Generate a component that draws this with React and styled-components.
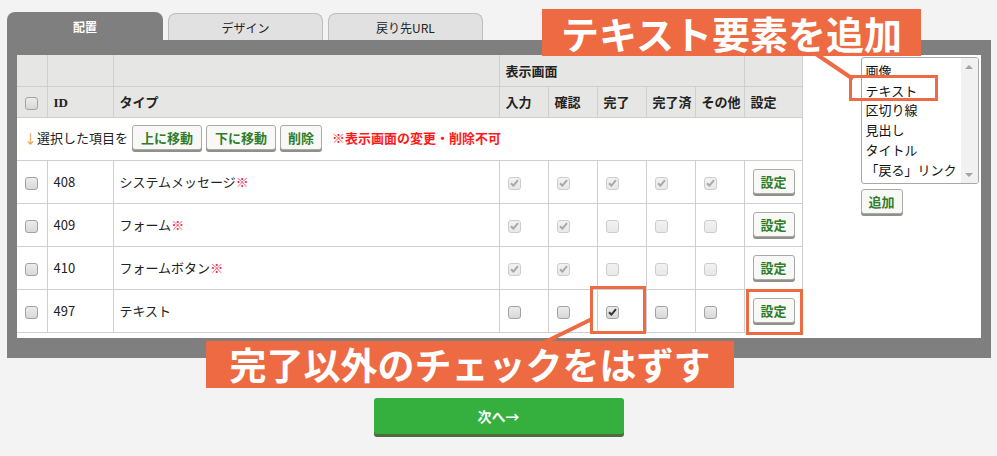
import React from "react";
import styled, { createGlobalStyle } from "styled-components";

const ORANGE = "#ed6a43";

const GlobalStyle = createGlobalStyle`
  body {
    margin: 0;
    background: #f3f3f3;
    font-family: "Noto Sans CJK JP", "Noto Sans", sans-serif;
    font-size: 13px;
    color: #222;
  }
`;

const Page = styled.div`
  position: relative;
  width: 997px;
  height: 456px;
  padding: 12px 0 0 7px;
  box-sizing: border-box;
  overflow: hidden;
`;

const TabBar = styled.div`
  display: flex;
  gap: 5px;
  height: 28px;
`;

const Tab = styled.div`
  width: ${(p) => p.width}px;
  box-sizing: border-box;
  display: flex;
  align-items: center;
  justify-content: center;
  border-radius: 8px 8px 0 0;
  font-size: 12px;
  background: ${(p) => (p.active ? "#7f7f7f" : "#e1e1e1")};
  color: ${(p) => (p.active ? "#fff" : "#222")};
  font-weight: ${(p) => (p.active ? 700 : 400)};
  border: ${(p) => (p.active ? "none" : "1px solid #bdbdbd")};
  border-bottom: none;
  margin-top: ${(p) => (p.active ? 0 : 1)}px;
`;

const Panel = styled.div`
  width: 984px;
  box-sizing: border-box;
  background: #7f7f7f;
  padding: 15px 10px 20px;
`;

const Inner = styled.div`
  background: #fff;
  display: flex;
  align-items: flex-start;
  height: 283px;
`;

const Table = styled.table`
  border-collapse: collapse;
  table-layout: fixed;
  width: 785px;
`;

const HeadRow = styled.tr`
  height: 31px;
`;

const BodyRow = styled.tr`
  height: 43px;
`;

const Th = styled.th`
  background: #e6e7e4;
  border: 1px solid #cfcfcf;
  border-top: none;
  text-align: left;
  padding: 0 0 0 ${(p) => (p.box ? 8 : 6)}px;
  font-weight: 700;
  font-size: 13px;
  white-space: nowrap;
  &:first-child {
    border-left: none;
  }
`;

const IdLabel = styled.span`
  font-family: "Liberation Serif", serif;
  font-weight: 700;
  font-size: 13px;
`;

const Td = styled.td`
  border: 1px solid #cfcfcf;
  padding: 0 0 0 ${(p) => (p.box ? 8 : 6)}px;
  text-align: left;
  white-space: nowrap;
  &:first-child {
    border-left: none;
  }
`;

const ToolCell = styled.td`
  border: 1px solid #cfcfcf;
  border-left: none;
  padding: 0 0 2px 7px;
`;

const ToolBar = styled.div`
  display: flex;
  align-items: center;
  gap: 4px;
`;

const Arrow = styled.span`
  color: #e89b2f;
`;

const Warn = styled.span`
  color: #ff1a1a;
  font-weight: 700;
  margin-left: 6px;
`;

const Mark = styled.span`
  color: #f5224f;
`;

const Button = styled.button`
  font-family: inherit;
  font-size: 13px;
  font-weight: 700;
  color: #2f7d2a;
  background: #f8f8f6;
  border: 1px solid #a9aca6;
  border-radius: 3px;
  box-shadow: 0 2px 0 #8e918b;
  height: 25px;
  padding: 0 ${(p) => p.pad || 8}px;
  line-height: 1;
  cursor: pointer;
`;

const Box = styled.span`
  display: inline-flex;
  align-items: center;
  justify-content: center;
  width: 13px;
  height: 13px;
  box-sizing: border-box;
  border-radius: 3px;
  vertical-align: middle;
  border: 1px solid ${(p) => (p.disabled ? "#cdcdcd" : "#a3a3a3")};
  background: ${(p) =>
    p.disabled
      ? "linear-gradient(#f2f2f2, #e8e8e8)"
      : "linear-gradient(#ececec, #d8d8d8)"};
  svg {
    display: block;
  }
`;

const Check = ({ checked, disabled }) => (
  <Box disabled={disabled}>
    {checked && (
      <svg width="9" height="8" viewBox="0 0 9 8">
        <path
          d="M1 4.2 L3.4 6.6 L8 1.2"
          fill="none"
          stroke={disabled ? "#a8a8a8" : "#333"}
          strokeWidth="2"
        />
      </svg>
    )}
  </Box>
);

const Side = styled.div`
  margin-left: 58px;
  padding-top: 2px;
  display: flex;
  flex-direction: column;
  align-items: flex-start;
  gap: 5px;
`;

const ListBox = styled.div`
  width: 118px;
  height: 127px;
  box-sizing: border-box;
  border: 1px solid #a8a8a8;
  border-radius: 3px;
  display: flex;
  overflow: hidden;
  background: #fff;
`;

const ListItems = styled.div`
  flex: 1;
  padding: 3px 0 0 4px;
  font-size: 13px;
  line-height: 19.7px;
  color: #111;
  white-space: nowrap;
  overflow: hidden;
`;

const ScrollTrack = styled.div`
  width: 17px;
  flex: none;
  background: #f1f1f1;
  display: flex;
  flex-direction: column;
  justify-content: space-between;
  align-items: center;
  padding: 7px 0 6px;
`;

const Tri = styled.span`
  width: 0;
  height: 0;
  border-left: 4px solid transparent;
  border-right: 4px solid transparent;
  ${(p) =>
    p.up
      ? "border-bottom: 4px solid #a3a3a3;"
      : "border-top: 4px solid #a3a3a3;"}
`;

const Footer = styled.div`
  display: flex;
  justify-content: center;
  padding: 40px 7px 0 0;
`;

const NextButton = styled.button`
  width: 250px;
  height: 36px;
  background: #35b03f;
  color: #fff;
  font-family: inherit;
  font-size: 14px;
  font-weight: 700;
  border: none;
  border-radius: 3px;
  box-shadow: 0 3px 0 #4e6c40;
`;

const Callout = styled.div`
  position: absolute;
  left: ${(p) => p.x}px;
  top: ${(p) => p.y}px;
  width: ${(p) => p.w}px;
  height: 47px;
  background: ${ORANGE};
  color: #fff;
  font-weight: 700;
  font-size: ${(p) => p.size}px;
  display: flex;
  align-items: center;
  justify-content: center;
  line-height: 1;
`;

const Overlay = styled.svg`
  position: absolute;
  left: 0;
  top: 0;
  pointer-events: none;
`;

const rows = [
  { id: 408, name: "システムメッセージ", mark: true, checks: [1, 1, 1, 1, 1], locked: true },
  { id: 409, name: "フォーム", mark: true, checks: [1, 1, 0, 0, 0], locked: true },
  { id: 410, name: "フォームボタン", mark: true, checks: [1, 1, 0, 0, 0], locked: true },
  { id: 497, name: "テキスト", mark: false, checks: [0, 0, 1, 0, 0], locked: false },
];

const items = ["画像", "テキスト", "区切り線", "見出し", "タイトル", "「戻る」リンク"];

export default function App() {
  return (
    <Page>
      <GlobalStyle />
      <TabBar>
        <Tab width={156} active>配置</Tab>
        <Tab width={155}>デザイン</Tab>
        <Tab width={155}>戻り先URL</Tab>
      </TabBar>
      <Panel>
        <Inner>
          <Table>
            <colgroup>
              <col style={{ width: 30 }} />
              <col style={{ width: 66 }} />
              <col style={{ width: 386 }} />
              <col style={{ width: 49 }} />
              <col style={{ width: 49 }} />
              <col style={{ width: 49 }} />
              <col style={{ width: 49 }} />
              <col style={{ width: 49 }} />
              <col style={{ width: 58 }} />
            </colgroup>
            <thead>
              <HeadRow>
                <Th />
                <Th />
                <Th />
                <Th colSpan={5}>表示画面</Th>
                <Th />
              </HeadRow>
              <HeadRow>
                <Th box>
                  <Check />
                </Th>
                <Th>
                  <IdLabel>ID</IdLabel>
                </Th>
                <Th>タイプ</Th>
                <Th>入力</Th>
                <Th>確認</Th>
                <Th>完了</Th>
                <Th>完了済</Th>
                <Th>その他</Th>
                <Th>設定</Th>
              </HeadRow>
            </thead>
            <tbody>
              <BodyRow>
                <ToolCell colSpan={9}>
                  <ToolBar>
                    <span>
                      <Arrow>↓</Arrow>選択した項目を
                    </span>
                    <Button>上に移動</Button>
                    <Button>下に移動</Button>
                    <Button pad={7}>削除</Button>
                    <Warn>※表示画面の変更・削除不可</Warn>
                  </ToolBar>
                </ToolCell>
              </BodyRow>
              {rows.map((r) => (
                <BodyRow key={r.id}>
                  <Td box>
                    <Check />
                  </Td>
                  <Td>{r.id}</Td>
                  <Td>
                    {r.name}
                    {r.mark && <Mark>※</Mark>}
                  </Td>
                  {r.checks.map((c, i) => (
                    <Td key={i} box>
                      <Check checked={!!c} disabled={r.locked} />
                    </Td>
                  ))}
                  <Td box>
                    <Button pad={7}>設定</Button>
                  </Td>
                </BodyRow>
              ))}
            </tbody>
          </Table>
          <Side>
            <ListBox>
              <ListItems>
                {items.map((t) => (
                  <div key={t}>{t}</div>
                ))}
              </ListItems>
              <ScrollTrack>
                <Tri up />
                <Tri />
              </ScrollTrack>
            </ListBox>
            <Button pad={7}>追加</Button>
          </Side>
        </Inner>
      </Panel>
      <Footer>
        <NextButton>次へ→</NextButton>
      </Footer>

      <Overlay width="997" height="456">
        <line x1="816" y1="54" x2="853" y2="79" stroke={ORANGE} strokeWidth="4" />
        <line x1="543" y1="343" x2="592" y2="319" stroke={ORANGE} strokeWidth="4" />
        <rect x="850.5" y="76.5" width="86" height="23" fill="none" stroke={ORANGE} strokeWidth="3" />
        <rect x="591.5" y="287.5" width="53" height="45" fill="none" stroke={ORANGE} strokeWidth="3" />
        <rect x="747.5" y="290.5" width="54" height="43" fill="none" stroke={ORANGE} strokeWidth="3" />
      </Overlay>
      <Callout x={542} y={9} w={379} size={38}>
        テキスト要素を追加
      </Callout>
      <Callout x={206} y={341} w={528} size={37}>
        完了以外のチェックをはずす
      </Callout>
    </Page>
  );
}
